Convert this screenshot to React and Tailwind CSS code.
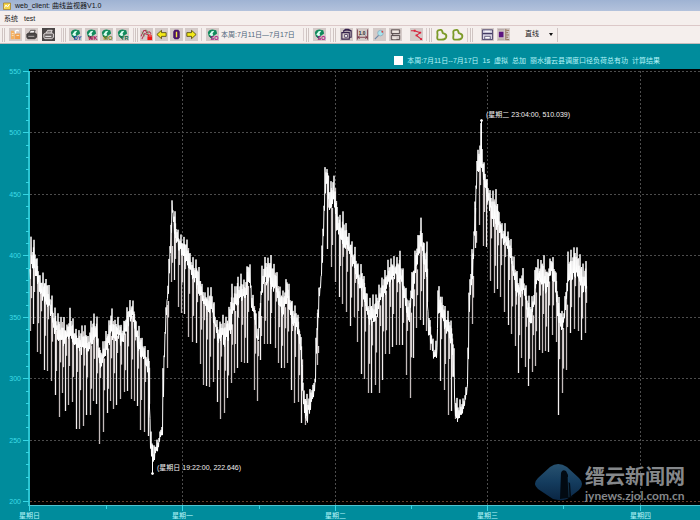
import React from "react";

const BODY = [
  [30, 262, 290], [31, 238, 272], [34, 240, 270], [37, 258, 280], [40, 275, 293], [43, 275, 300], [48, 278, 308],
  [52, 297, 318], [55, 308, 335], [60, 318, 340], [63, 312, 342], [66, 328, 342], [70, 310, 338], [73, 320, 340],
  [77, 330, 350], [80, 327, 352], [84, 322, 350], [88, 335, 355], [94, 311, 338], [97, 318, 345], [100, 350, 370],
  [104, 338, 360], [108, 325, 350], [111, 306, 335], [115, 320, 340], [119, 314, 340], [122, 328, 345],
  [126, 312, 330], [129, 300, 322], [133, 299, 318], [136, 320, 340], [140, 330, 355], [145, 346, 362],
  [149, 352, 375], [150, 400, 440], [151, 433, 452], [153, 445, 462], [155, 443, 458], [158, 438, 450],
  [162, 424, 432], [163, 370, 430], [164, 335, 375], [166, 308, 322], [167, 297, 305], [169, 258, 290],
  [171, 215, 250], [172, 200, 212], [175, 213, 235], [178, 230, 247], [181, 235, 252], [184, 236, 258],
  [188, 240, 265], [191, 257, 275], [195, 258, 282], [198, 265, 290], [201, 277, 298], [204, 293, 307],
  [208, 288, 310], [212, 290, 315], [215, 307, 330], [218, 325, 342], [222, 315, 340], [226, 315, 345],
  [229, 308, 335], [232, 280, 325], [235, 288, 310], [237, 275, 305], [241, 276, 300], [245, 280, 300],
  [248, 256, 285], [250, 265, 285], [252, 290, 312], [255, 302, 320], [257, 328, 345], [259, 310, 335],
  [262, 265, 290], [266, 256, 282], [270, 255, 282], [273, 258, 290], [276, 268, 290], [279, 283, 310],
  [283, 292, 315], [287, 276, 300], [290, 288, 312], [293, 305, 325], [297, 308, 330], [300, 325, 345],
  [303, 365, 400], [304, 390, 415], [307, 393, 420], [310, 387, 412], [313, 384, 398], [315, 370, 390],
  [316, 335, 370], [317, 305, 350], [319, 288, 305], [321, 270, 285], [322, 245, 275], [323, 205, 255],
  [325, 166, 195], [327, 165, 180], [329, 182, 205], [331, 180, 212], [333, 174, 200], [335, 180, 205],
  [337, 205, 235], [340, 215, 235], [343, 213, 250], [346, 222, 245], [350, 237, 255], [353, 243, 265],
  [356, 252, 275], [359, 268, 290], [362, 265, 290], [365, 280, 305], [368, 298, 320], [371, 298, 325],
  [375, 295, 320], [378, 290, 314], [381, 280, 300], [384, 273, 297], [387, 263, 290], [390, 258, 285],
  [394, 257, 277], [397, 256, 280], [400, 250, 285], [403, 268, 292], [406, 290, 312], [409, 300, 325],
  [412, 270, 300], [415, 250, 280], [418, 235, 260], [421, 217, 242], [424, 243, 268], [427, 244, 275],
  [428, 300, 330], [431, 328, 345], [434, 345, 359], [437, 340, 357], [438, 282, 310], [441, 292, 312],
  [444, 303, 325], [448, 312, 335], [452, 323, 345], [454, 345, 385], [455, 395, 412], [458, 398, 422],
  [461, 402, 416], [464, 396, 408], [467, 383, 395], [468, 310, 385], [470, 270, 300], [473, 240, 270],
  [475, 200, 235], [477, 155, 178], [479, 148, 168], [481, 122, 165], [483, 156, 178], [485, 168, 190],
  [487, 178, 198], [490, 190, 210], [493, 193, 225], [496, 188, 225], [499, 212, 230], [502, 224, 240],
  [505, 225, 245], [508, 230, 250], [511, 240, 265], [513, 255, 277], [516, 265, 292], [519, 283, 300],
  [522, 265, 290], [525, 280, 300], [528, 295, 318], [531, 300, 325], [534, 285, 308], [536, 258, 285],
  [539, 263, 282], [543, 253, 290], [547, 270, 290], [551, 253, 272], [555, 262, 287], [558, 295, 322],
  [562, 312, 332], [565, 298, 318], [568, 255, 290], [571, 252, 277], [575, 243, 275], [578, 250, 275],
  [582, 262, 290], [586, 260, 290],
];

const DIPS = [
  [30, 331], [33, 324], [37, 352], [40, 354], [44, 370], [47, 371], [51, 381], [55, 395], [59, 417], [62, 393],
  [65, 411], [68, 405], [72, 402], [76, 429], [79, 429], [83, 426], [86, 415], [90, 415], [93, 401], [96, 404],
  [99, 444], [103, 432], [107, 413], [110, 401], [113, 409], [116, 405], [120, 399], [124, 392], [127, 391],
  [131, 399], [134, 401], [137, 406], [140, 430], [144, 432], [148, 436], [167, 368], [171, 282], [174, 280],
  [178, 307], [181, 313], [184, 314], [188, 337], [192, 342], [196, 343], [200, 364], [203, 385], [206, 386],
  [209, 387], [213, 382], [217, 402], [220, 419], [224, 413], [227, 398], [231, 383], [234, 373], [237, 368],
  [241, 362], [244, 363], [247, 363], [254, 390], [257, 401], [260, 360], [264, 344], [267, 344], [270, 344],
  [275, 348], [278, 363], [281, 368], [284, 368], [287, 363], [291, 390], [294, 403], [298, 402], [301, 423],
  [305, 425], [317, 365], [327, 249], [331, 267], [335, 282], [339, 297], [342, 304], [346, 312], [350, 326],
  [354, 317], [357, 342], [361, 374], [364, 379], [368, 393], [371, 393], [375, 385], [379, 393], [382, 380],
  [385, 354], [389, 354], [392, 347], [396, 345], [399, 345], [402, 345], [406, 375], [410, 398], [413, 358],
  [416, 328], [420, 320], [423, 325], [426, 331], [430, 350], [440, 381], [444, 390], [448, 415], [451, 411],
  [455, 419], [472, 324], [475, 248], [479, 225], [483, 246], [486, 247], [490, 281], [494, 293], [497, 289],
  [500, 297], [504, 312], [508, 325], [511, 334], [515, 346], [518, 373], [521, 358], [525, 367], [528, 386],
  [532, 372], [535, 366], [539, 350], [542, 353], [545, 351], [548, 352], [552, 335], [556, 342], [558, 415],
  [562, 393], [566, 370], [570, 333], [574, 329], [578, 331], [581, 340], [585, 333],
];

function bandAt(x) {
  let i = 0;
  while (i < BODY.length - 2 && BODY[i + 1][0] < x) i++;
  const [x0, t0, b0] = BODY[i];
  const [x1, t1, b1] = BODY[i + 1];
  const k = Math.min(1, Math.max(0, (x - x0) / (x1 - x0)));
  return [t0 + (t1 - t0) * k, b0 + (b1 - b0) * k];
}

function buildCurve() {
  let seed = 11;
  const rand = () => {
    seed = (seed * 16807) % 2147483647;
    return seed / 2147483647;
  };
  const pts = [];
  for (let x = 30; x <= 586.5; x += 0.5) {
    const [top, bottom] = bandAt(x);
    const h = bottom - top;
    const step = Math.round((x - 30) * 2);
    let y;
    if (step % 6 === 2) y = top - h * 0.1 + rand() * h * 0.2;
    else if (step % 2) y = top + h * (0.75 + rand() * 0.4);
    else y = top + h * (0.25 + rand() * 0.3);
    pts.push(x.toFixed(1) + "," + y.toFixed(1));
  }
  return pts.join(" ");
}

const CURVE = buildCurve();
const Y_LABELS = [550, 500, 450, 400, 350, 300, 250, 200];
const yOf = (v) => 71.5 + Math.round((550 - v) * 1.229);
const X_LABELS = [["星期日", 29.5], ["星期一", 182.5], ["星期二", 335.5], ["星期三", 487.5], ["星期四", 640.5]];
const MINOR_X = [106.5, 259.5, 411.5, 563.5];
const MINOR_Y = Array.from({ length: 36 }, (_, i) => 550 - i * 10);

function Chart() {
  return (
    <svg
      viewBox="0 69 700 451"
      className="block w-full font-['Liberation_Sans','Noto_Sans_CJK_SC',sans-serif] text-[7px]"
      role="img"
      aria-label="曲线"
    >
      <rect x="29" y="69" width="671" height="436" fill="#000" />
      <g strokeWidth="1" strokeDasharray="2 2">
        {Y_LABELS.map((v) => (
          <line key={v} x1="30" x2="700" y1={yOf(v)} y2={yOf(v)} stroke={v === 200 ? "#64402f" : "#4c4c4c"} />
        ))}
        {X_LABELS.slice(1).map(([n, x]) => (
          <line key={n} x1={x} x2={x} y1="71" y2="505" stroke="#4c4c4c" />
        ))}
      </g>
      <g stroke="#35d6e4" strokeWidth="1">
        <line x1="29" x2="29" y1="71" y2="505" strokeWidth="2" stroke="#2cc4d2" />
        <line x1="28" x2="700" y1="505.5" y2="505.5" stroke="#4fc3cf" />
        {MINOR_Y.map((v) => (
          <line key={v} x1={v % 50 ? 26 : 23} x2="29" y1={yOf(v)} y2={yOf(v)} />
        ))}
        {X_LABELS.map(([n, x]) => (
          <line key={n} x1={x} x2={x} y1="505" y2="511" />
        ))}
        {MINOR_X.map((x) => (
          <line key={x} x1={x} x2={x} y1="505" y2="509" />
        ))}
      </g>
      <g fill="#3fdce8">
        {Y_LABELS.map((v) => (
          <text key={v} x="21" y={yOf(v) + 2.5} textAnchor="end">{v}</text>
        ))}
      </g>
      <g fill="#b4f4f8">
        {X_LABELS.map(([n, x]) => (
          <text key={n} x={x} y="518" textAnchor="middle">{n}</text>
        ))}
      </g>

      <g strokeWidth="1.3">
        {DIPS.map(([x, y], i) => {
          const [top, bottom] = bandAt(x);
          const reach = 0.2 + ((i * 7) % 5) * 0.1;
          return (
            <g key={x}>
              <line x1={x + 0.5} x2={x + 0.5} y1={top + 8} y2={y} stroke={i % 3 === 1 ? "#f4f0f0" : "#c4bcbc"} />
              <line x1={x + 1.5} x2={x + 1.5} y1={bottom - 4} y2={Math.max(bottom, bottom + (y - bottom) * reach)} stroke="#d8d2d2" />
            </g>
          );
        })}
      </g>
      <polyline points={CURVE} fill="none" stroke="#fff" strokeWidth="1" strokeLinejoin="bevel" />
      <g stroke="#fff" strokeWidth="1" fill="#fff">
        <line x1="481.5" x2="481.5" y1="121" y2="160" />
        <line x1="152.5" x2="152.5" y1="445" y2="473" />
        <circle cx="481.5" cy="120.5" r="1" />
        <circle cx="152.5" cy="473.5" r="1" />
      </g>
      <g fill="#f4f0f0">
        <text x="486" y="117">(星期二 23:04:00, 510.039)</text>
        <text x="157" y="470">(星期日 19:22:00, 222.646)</text>
      </g>

      <defs>
        <linearGradient id="mark" x1="0" y1="0" x2="0" y2="1">
          <stop offset="0" stopColor="#285270" />
          <stop offset="0.5" stopColor="#143c5e" />
          <stop offset="1" stopColor="#0a2644" />
        </linearGradient>
      </defs>
      <path d="M550 467 Q558 461 567 467 L579 478 Q585 484 579 490 L570 497 Q565 501 558 500 L553 499 L538 489 Q532 484 538 478Z" fill="url(#mark)" />
      <path d="M560 499 L561 473 Q562 469 566 471 L568 475 V482 L570 483 L571 496 L574 497Z" fill="#020a12" />
      <path d="M568 477 L569 497" stroke="#1d4a6c" strokeWidth="0.6" />
      <g fill="#85888b">
        <text x="585" y="484" className="text-[20px] font-bold">缙云新闻网</text>
        <text x="585" y="500" className="font-['Lato',sans-serif] text-[12px] font-bold">jynews.zjol.com.cn</text>
      </g>
    </svg>
  );
}

function Icon({ children }) {
  return <svg viewBox="0 0 14 14" className="block size-[13px]" aria-hidden="true">{children}</svg>;
}

function Tool({ label, children, plain, dark }) {
  const tone = dark ? "bg-[#4a4646]" : plain ? "" : "bg-[#d4cac8]";
  return (
    <button type="button" aria-label={label} title={label} className={`size-[13px] shrink-0 ${tone}`}>
      <Icon>{children}</Icon>
    </button>
  );
}

function Grip() {
  return <span className="h-[14px] w-[3px] shrink-0 border-x border-[#cfc4c2] bg-[#f8f2f0]" />;
}

function Globe({ tag, color }) {
  return (
    <>
      <path d="M2 5 Q3 1.500 7 1.500 L11 2.500 L12 6 L9 8 L6 11 L3 9Z" fill="#128a5c" />
      <path d="M3.500 7 L6 3.500 L9 3 L7 6 L8 8 L5.500 8.500Z" fill="#d8fff0" />
      <path d="M4 9 L7 12" stroke="#0a5a40" />
      <text x="13.500" y="13" textAnchor="end" fill={color} className="font-['Liberation_Sans',sans-serif] text-[6px] font-bold">{tag}</text>
    </>
  );
}

function Printer({ light }) {
  const ink = light ? "#f4eeee" : "#3a3636";
  return (
    <>
      <path d="M4 6 L6 2.500 H11 L9.500 6Z" fill={light ? "#8c8686" : "#f8f4f4"} stroke={ink} strokeWidth="0.9" />
      <path d="M2 6.500 L4 5.500 H11 L12.500 6.500 V10 L10.500 11.500 H3 L2 10Z" fill={light ? "#6b6565" : "#4a4646"} stroke={ink} strokeWidth="0.9" />
      <path d="M3.500 9 H10" stroke={light ? "#fff" : "#b8b0b0"} strokeWidth="1" />
    </>
  );
}

const LOOP = "M3.500 2.500 Q7 1 8 4 Q8 6 10 6 Q13 7 12 10 Q11 12.500 7 12.500 H4 Q2 12.500 2.500 9 Q3 7 2.500 5.500 Q2 3.500 3.500 2.500Z";
const LEGEND = ["本周:7月11日--7月17日", "1s", "虚拟", "总加", "丽水缙云县调度口径负荷总有功", "计算结果"];

export default function App() {
  return (
    <div className="min-h-screen bg-[#008c9c] font-['Liberation_Sans','Noto_Sans_CJK_SC',sans-serif] text-[7px] leading-none text-[#222]">
      <header className="flex h-[11px] items-center gap-1 bg-linear-to-b from-[#9fb3d3] to-[#b3c2dc] pl-[3px]">
        <svg viewBox="0 0 8 8" className="size-[8px]" aria-hidden="true">
          <path d="M0.500 1 H7.500 V7.500 H0.500Z" fill="#f6d64a" stroke="#a07a20" strokeWidth="0.7" />
          <path d="M1.500 5.500 L3 3 L4.500 5 L6.500 2" stroke="#fff" fill="none" />
        </svg>
        <h1 className="text-[7px] text-[#111]">web_client: 曲线监视器V1.0</h1>
      </header>

      <nav className="flex h-[15px] items-center gap-[6px] border-b border-[#dcc8c8] bg-[#f5efed] pl-[4px]">
        <button type="button">系统</button>
        <button type="button">test</button>
      </nav>

      <div className="flex h-[18px] items-center border-b border-[#c4bcbc] bg-[#f5efed]" role="toolbar">
        <div className="flex w-[61px] items-center justify-between pr-[6px] pl-[2px]">
          <Grip />
          <Tool label="打开">
            <path d="M2 3 H5 L6 4.500 V12 H2Z" fill="#f5b060" />
            <path d="M6.500 6 H12 V12 H6.500Z" fill="#f2a04c" />
            <path d="M7 6 V3.500 Q9 1.500 10.500 3.500" stroke="#fff" strokeWidth="1.500" fill="none" />
            <path d="M3 6 H5 M3 8 H5 M8 8 H11" stroke="#fbe6c4" />
          </Tool>
          <Tool label="打印"><Printer /></Tool>
          <Tool label="打印预览" dark><Printer light /></Tool>
        </div>
        <div className="flex w-[72px] items-center justify-between border-l border-[#d8cccc] pr-[4px] pl-[1px]">
          <Grip />
          <Tool label="日"><Globe tag="DY" color="#1c3c9c" /></Tool>
          <Tool label="周"><Globe tag="WK" color="#b00c50" /></Tool>
          <Tool label="月"><Globe tag="MO" color="#7c8418" /></Tool>
          <Tool label="年"><Globe tag="YR" color="#0c6c3c" /></Tool>
        </div>
        <div className="flex w-[68px] items-center justify-between border-l border-[#d8cccc] pr-[3px] pl-[1px]">
          <Grip />
          <Tool label="锁定曲线">
            <path d="M1 9 L4 3 L6 2.500 L7 5 L10 4 L12 6 M2 12 L5 6 L8 7 L10 9" stroke="#b03050" fill="none" strokeWidth="1.100" />
            <path d="M2 4 L5 9 M7 2 L9 7" stroke="#609050" strokeWidth="0.900" />
            <rect x="8" y="9" width="5" height="4" fill="#f01818" />
            <path d="M9 9 V7.500 H12 V9" stroke="#f01818" fill="none" />
          </Tool>
          <Tool label="上一个"><path d="M2 7 L7 2.500 V5 H12 V9 H7 V11.500Z" fill="#f4ea18" stroke="#504808" strokeWidth="0.9" /></Tool>
          <Tool label="当前">
            <path d="M5 2 H9 L10.500 4 V10 L9 12 H5 L3.500 10 V4Z" fill="#4a1468" />
            <path d="M7 4 V10" stroke="#f4e43c" strokeWidth="1.500" />
          </Tool>
          <Tool label="下一个"><path d="M12 7 L7 2.500 V5 H2 V9 H7 V11.500Z" fill="#f4ea18" stroke="#504808" strokeWidth="0.9" /></Tool>
        </div>
        <div className="flex w-[103px] items-center gap-[2px] border-x border-[#d8cccc] pl-[4px]">
          <Tool label="选择时段"><Globe tag="SO" color="#b00c80" /></Tool>
          <span className="text-[#4c6478]">本周:7月11日—7月17日</span>
        </div>
        <div className="flex w-[27px] items-center gap-[4px] border-r border-[#d8cccc] pl-[2px]">
          <Grip />
          <Tool label="刷新"><Globe tag="SO" color="#b00c80" /></Tool>
        </div>
        <div className="flex w-[77px] items-center justify-between pr-[6px] pl-[2px]">
          <Grip />
          <Tool label="复制">
            <path d="M2 5 H10 V12 H2Z M4 5 V3 H12 V10 H10 M4 3 L6 1.500 H9 L12 3" stroke="#34204c" fill="none" strokeWidth="1.200" />
            <path d="M5 7 H8 V10 H5Z" fill="#fff" stroke="#34204c" strokeWidth="0.800" />
          </Tool>
          <Tool label="数值">
            <path d="M1.500 1.500 V12.500 M12.500 1.500 V12.500 M2 10 H12 M4 8.500 L2 10 L4 11.500 M10 8.500 L12 10 L10 11.500" stroke="#702c40" fill="none" strokeWidth="0.900" />
            <text x="3" y="7" fill="#222" className="text-[5px] font-bold">1.0</text>
          </Tool>
          <Tool label="放大">
            <circle cx="8" cy="5.500" r="3" fill="#a6e4ee" stroke="#88a8bc" strokeWidth="0.800" />
            <path d="M6 8 L2 12" stroke="#6c88a8" strokeWidth="1.300" />
            <circle cx="10" cy="4" r="1" fill="#d84848" />
          </Tool>
          <Tool label="保存">
            <path d="M2.500 2 H11.500 V6 H2.500Z M2.500 8 H11.500 V12.500 H2.500Z M4 6 V8" stroke="#504444" fill="none" />
            <path d="M4 3 H10 V5 H4Z M4 10 H8 V12 H4Z" fill="#f0e8e0" />
          </Tool>
        </div>
        <div className="flex w-[19px] items-center border-r border-[#d8cccc] pl-[2px]">
          <Tool label="折线">
            <path d="M1 3 H5 L11 5 L7 8 L12 12" stroke="#d02840" strokeWidth="1.200" fill="none" />
            <path d="M4 2 H6 V4 H4Z M10 4 H12 V6 H10Z M6 7 H8 V9 H6Z M11 11 H13 V13 H11Z" fill="#e02038" />
          </Tool>
        </div>
        <div className="flex w-[41px] items-center justify-between border-r border-[#d8cccc] pr-[3px] pl-[2px]">
          <Grip />
          <Tool label="区域一" plain><path d={LOOP} fill="none" stroke="#7c9a28" strokeWidth="2" /></Tool>
          <Tool label="区域二" plain><path d={LOOP} fill="none" stroke="#7c9a28" strokeWidth="2" /></Tool>
        </div>
        <div className="flex w-[90px] items-center border-r border-[#cfc4c4] pl-[2px]">
          <Grip />
          <div className="ml-[8px] flex gap-[3px]">
            <Tool label="存盘">
              <path d="M1.500 2 H12.500 V12.500 H1.500Z" fill="#d8d4e4" stroke="#443c64" />
              <path d="M2 6 H12" stroke="#443c64" strokeWidth="1.500" />
              <path d="M4 9 H10 V12 H4Z" fill="#fff" stroke="#443c64" strokeWidth="0.800" />
              <path d="M4 3.500 H10" stroke="#fff" />
            </Tool>
            <Tool label="标尺">
              <path d="M2 4 H7 V10 H2Z" fill="#5c1480" />
              <path d="M9.500 1 V13 M10 2.500 H13 M10 5 H12 M10 7.500 H13 M10 10 H12 M10 12.500 H13" stroke="#8c6c50" />
              <path d="M1 2 H8 M1 12 H8" stroke="#a89898" />
            </Tool>
          </div>
          <div className="relative ml-[8px] flex flex-1 items-center">
            <select aria-label="线型" className="w-full appearance-none bg-transparent pl-[7px] text-[7px] leading-normal outline-none">
              <option>直线</option>
            </select>
            <svg viewBox="0 0 4 3" className="pointer-events-none absolute right-[4px] h-[3px] w-[4px]" aria-hidden="true">
              <path d="M0 0 H4 L2 3Z" fill="#111" />
            </svg>
          </div>
        </div>
      </div>

      <main className="bg-[#008c9c]">
        <div className="flex h-[25px] items-center justify-end pt-[7px] pr-[40px]">
          <label className="flex items-center gap-[4px] text-[#b4f4f8]">
            <input type="checkbox" className="size-[9px] appearance-none bg-white" />
            {LEGEND.map((part) => (
              <span key={part}>{part}</span>
            ))}
          </label>
        </div>
        <Chart />
      </main>
    </div>
  );
}
